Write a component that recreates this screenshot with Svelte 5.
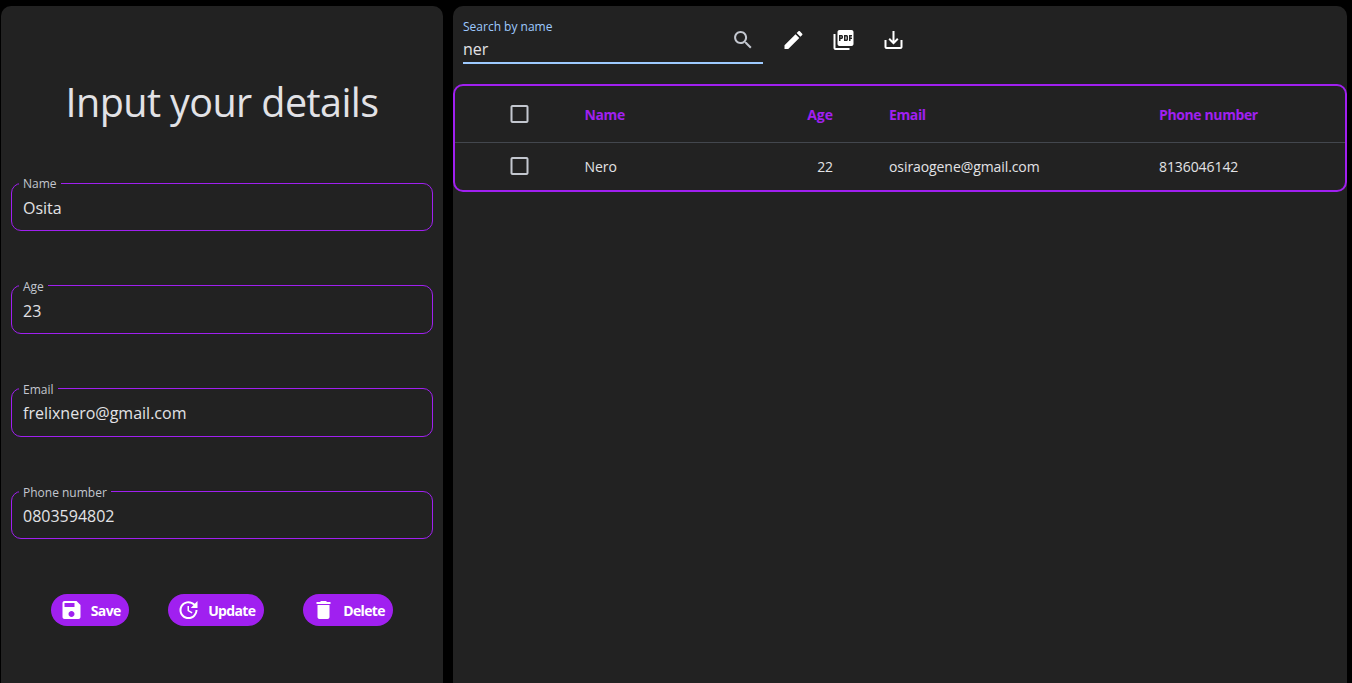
<script>
  const fields = [
    { label: 'Name', value: 'Osita' },
    { label: 'Age', value: '23' },
    { label: 'Email', value: 'frelixnero@gmail.com' },
    { label: 'Phone number', value: '0803594802' }
  ];
  const icons = {
    save: 'M17 3H5c-1.11 0-2 .9-2 2v14c0 1.1.89 2 2 2h14c1.1 0 2-.9 2-2V7l-4-4zm-5 16c-1.66 0-3-1.34-3-3s1.34-3 3-3 3 1.34 3 3-1.34 3-3 3zm3-10H5V5h10v4z',
    update: 'M21 10.12h-6.78l2.74-2.82c-2.73-2.7-7.15-2.8-9.88-.1-2.73 2.71-2.73 7.08 0 9.79s7.15 2.71 9.88 0C18.32 15.65 19 14.08 19 12.1h2c0 1.98-.88 4.55-2.64 6.29-3.51 3.48-9.21 3.48-12.72 0-3.5-3.47-3.53-9.11-.02-12.58s9.14-3.47 12.65 0L21 3v7.12zM12.5 8v4.25l3.5 2.08-.72 1.21L11 13V8h1.5z',
    trash: 'M6 19c0 1.1.9 2 2 2h8c1.1 0 2-.9 2-2V7H6v12zM19 4h-3.5l-1-1h-5l-1 1H5v2h14V4z',
    edit: 'M3 17.25V21h3.75L17.81 9.94l-3.75-3.75L3 17.25zM20.71 7.04c.39-.39.39-1.02 0-1.41l-2.34-2.34c-.39-.39-1.02-.39-1.41 0l-1.83 1.83 3.75 3.75 1.83-1.83z',
    pdf: 'M20 2H8c-1.1 0-2 .9-2 2v12c0 1.1.9 2 2 2h12c1.1 0 2-.9 2-2V4c0-1.1-.9-2-2-2zm-8.5 7.5c0 .83-.67 1.5-1.5 1.5H9v2H7.5V7H10c.83 0 1.5.67 1.5 1.5v1zm5 2c0 .83-.67 1.5-1.5 1.5h-2.5V7H15c.83 0 1.5.67 1.5 1.5v3zm4-3H19v1h1.5V11H19v2h-1.5V7h3v1.5zM9 9.5h1v-1H9v1zM4 6H2v14c0 1.1.9 2 2 2h14v-2H4V6zm10 5.5h1v-3h-1v3z',
    download: 'M19 12v7H5v-7H3v7c0 1.1.9 2 2 2h14c1.1 0 2-.9 2-2v-7h-2zm-6 .67l2.59-2.58L17 11.5l-5 5-5-5 1.41-1.41L11 12.67V3h2z',
    search: 'M15.5 14h-.79l-.28-.27C15.41 12.59 16 11.11 16 9.5 16 5.91 13.09 3 9.5 3S3 5.91 3 9.5 5.91 16 9.5 16c1.61 0 3.09-.59 4.23-1.57l.27.28v.79l5 4.99L20.49 19l-4.99-5zm-6 0C7.01 14 5 11.99 5 9.5S7.01 5 9.5 5 14 7.01 14 9.5 11.99 14 9.5 14z',
    box: 'M19 5v14H5V5h14m0-2H5c-1.1 0-2 .9-2 2v14c0 1.1.9 2 2 2h14c1.1 0 2-.9 2-2V5c0-1.1-.9-2-2-2z'
  };
  const buttons = [
    { name: 'save', text: 'Save' },
    { name: 'update', text: 'Update' },
    { name: 'trash', text: 'Delete' }
  ];
</script>

{#snippet icon(name, shift = 0.5)}
  <svg viewBox="0 0 24 24" width="24" height="24" fill="currentColor"><path transform="translate({shift} 0)" d={icons[name]} /></svg>
{/snippet}

<div class="app">
  <section class="panel form">
    <h1>Input your details</h1>
    <div class="fields">
      {#each fields as f}
        <fieldset>
          <legend>{f.label}</legend>
          <span>{f.value}</span>
        </fieldset>
      {/each}
    </div>
    <div class="buttons">
      {#each buttons as b}
        <button class={b.name}>{@render icon(b.name)}<span>{b.text}</span></button>
      {/each}
    </div>
  </section>

  <section class="panel data">
    <div class="toolbar">
      <div class="search">
        <div class="entry">
          <span class="hint">Search by name</span>
          <span class="query">ner</span>
        </div>
        {@render icon('search', 0.1)}
      </div>
      <div class="tool">{@render icon('edit')}</div>
      <div class="tool">{@render icon('pdf')}</div>
      <div class="tool">{@render icon('download')}</div>
    </div>
    <div class="table">
      <div class="row head">
        <div class="check">{@render icon('box')}</div>
        <div>Name</div>
        <div class="num">Age</div>
        <div>Email</div>
        <div>Phone number</div>
      </div>
      <div class="row">
        <div class="check">{@render icon('box')}</div>
        <div>Nero</div>
        <div class="num">22</div>
        <div>osiraogene@gmail.com</div>
        <div>8136046142</div>
      </div>
    </div>
  </section>
</div>

<style>
  :global(body) { background: #000; overflow: hidden; }
  .app {
    box-sizing: border-box; height: 683px; padding: 6px 5px 0 1px;
    display: flex; gap: 10px;
    font-family: "Open Sans", "Noto Sans", sans-serif; color: #e2e2e6;
  }
  svg { display: block; flex: none; }
  .panel { background: #222; border-radius: 10px 10px 0 0; box-sizing: border-box; }
  .form { width: 442px; padding: 68px 10px 0; }
  h1 {
    margin: 0; height: 56px; line-height: 56px; font-size: 39.5px; font-weight: 400;
    letter-spacing: -0.58px; text-align: center; white-space: nowrap;
  }
  .fields { display: flex; flex-direction: column; gap: 45.8px; margin-top: 44px; }
  fieldset {
    box-sizing: border-box; height: 57px; margin: 0; padding: 0 11px; min-width: 0;
    border: 1px solid #a020f0; border-radius: 10px;
  }
  legend {
    margin-left: -4px; padding: 2px 4px 0; height: 16px; line-height: 16px; font-size: 12px; color: #c3c7cf;
    white-space: nowrap;
  }
  fieldset:last-child legend { padding-top: 2.6px; height: 15.4px; }
  fieldset span { display: block; font-size: 16px; line-height: 22px; margin-top: 5px; width: max-content; }
  fieldset:nth-child(n + 3) span { margin-top: 4.5px; }
  .buttons { display: flex; gap: 39.4px; margin: 54.6px 0 0 40px; }
  button {
    box-sizing: border-box; height: 32px; border: 0; border-radius: 16px; padding: 0 0 0 8px;
    display: flex; align-items: center; gap: 7.8px; background: #a020f0; color: #fff;
    font: 700 14px/32px "Open Sans", "Noto Sans", sans-serif; letter-spacing: -0.65px;
  }
  button span { padding-top: 2px; height: 32px; }
  button.save { width: 78px; }
  button.update { width: 95.6px; }
  button.trash { width: 90px; }
  .data { flex: 1; }
  .toolbar { display: flex; height: 78px; padding-left: 10px; }
  .search {
    box-sizing: border-box; width: 300px; height: 58px; border-bottom: 2px solid #9ecaff;
    display: flex; justify-content: space-between; padding: 12px 8px 0 0; color: #c3c7cf;
  }
  .search > :global(svg) { margin-top: 10px; }
  .entry { display: flex; flex-direction: column; }
  .hint { font-size: 12px; line-height: 18px; color: #9ecaff; }
  .query { font-size: 16px; line-height: 24px; margin-top: 1px; color: #e2e2e6; }
  .tool { width: 24px; margin: 22px 0 0 18px; color: #fff; }
  .tool + .tool { margin-left: 26px; }
  .table { border: 2px solid #a020f0; border-radius: 10px; height: 104px; }
  .row {
    display: grid; grid-template-columns: 129.5px 198px 50.5px 56px 270px 1fr;
    height: 48px; align-items: center; font-size: 14px; line-height: 20px; white-space: nowrap;
    letter-spacing: -0.08px;
  }
  .row > div:nth-child(4) { grid-column: 5; }
  .head {
    height: 56px; border-bottom: 1px solid #43474e; font-weight: 700; color: #a020f0;
    letter-spacing: -0.38px;
  }
  .head > div:not(.check) { padding-top: 2px; }
  .head > .num { letter-spacing: 0; }
  .check { padding-left: 52px; color: #c3c7cf; }
  .row:not(.head) .check { padding-bottom: 2px; }
  .num { text-align: right; }
  span { white-space: nowrap; }
</style>
